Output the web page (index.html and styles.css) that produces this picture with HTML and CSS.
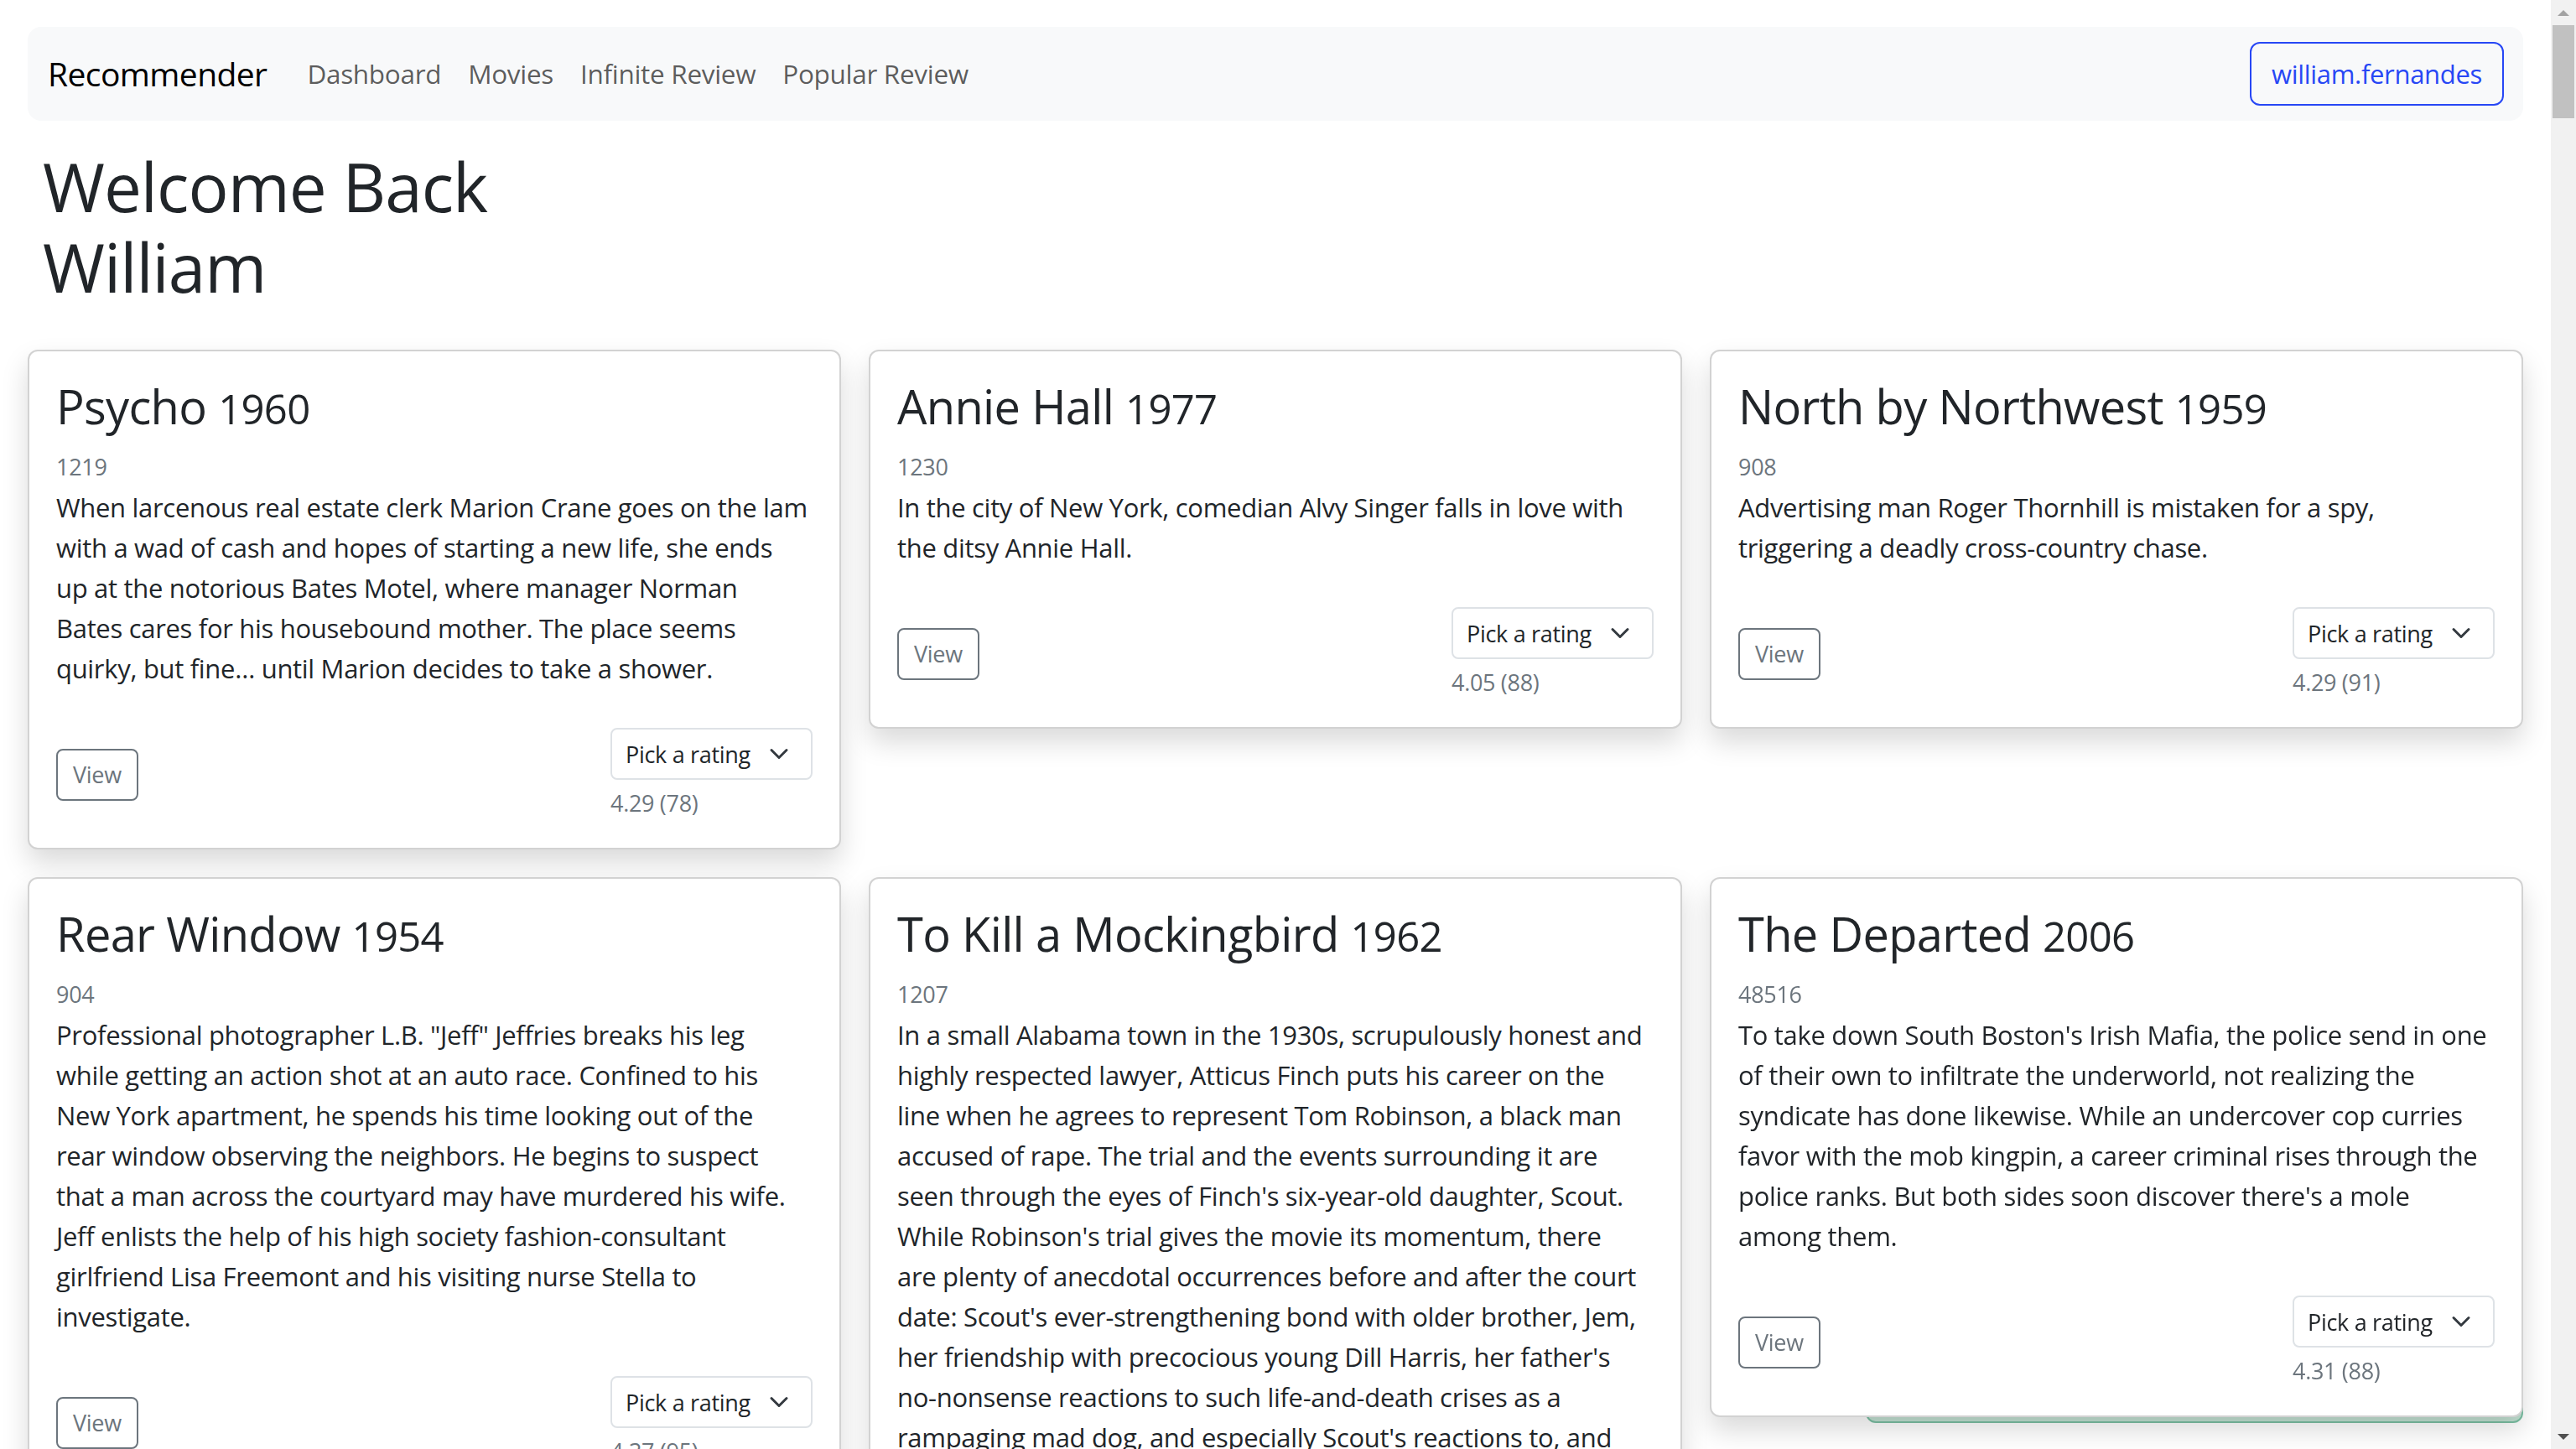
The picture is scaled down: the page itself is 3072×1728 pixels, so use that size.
FILE: index.html
```html
<!DOCTYPE html>
<html lang="en">
<head>
<meta charset="utf-8">
<title>Recommender</title>
<link rel="stylesheet" href="styles.css">
</head>
<body>
<div class="page">
  <nav class="navbar">
    <a class="brand" href="#">Recommender</a>
    <div class="nav-links">
      <a class="nav-link" href="#">Dashboard</a>
      <a class="nav-link" href="#">Movies</a>
      <a class="nav-link" href="#">Infinite Review</a>
      <a class="nav-link" href="#">Popular Review</a>
    </div>
    <button class="user-btn">william.fernandes</button>
  </nav>

  <h1 class="welcome">Welcome Back<br>William</h1>

  <div class="grid">
    <div class="card"><div class="card-body">
      <h3 class="card-title">Psycho <small>1960</small></h3>
      <div class="movie-id">1219</div>
      <p class="card-text">When larcenous real estate clerk Marion Crane goes on the lam<br>with a wad of cash and hopes of starting a new life, she ends<br>up at the notorious Bates Motel, where manager Norman<br>Bates cares for his housebound mother. The place seems<br>quirky, but fine… until Marion decides to take a shower.</p>
      <div class="card-actions">
        <button class="btn-view">View</button>
        <div class="rating">
          <span class="select-wrap"><select class="rating-select"><option>Pick a rating</option><option>1</option><option>2</option><option>3</option><option>4</option><option>5</option></select><svg class="chev" viewBox="0 0 16 16" width="24" height="24"><path d="m2 5 6 6 6-6" fill="none" stroke="#343a40" stroke-width="2" stroke-linecap="round" stroke-linejoin="round"/></svg></span>
          <div class="rating-avg">4.29 (78)</div>
        </div>
      </div>
    </div></div>

    <div class="card"><div class="card-body">
      <h3 class="card-title">Annie Hall <small>1977</small></h3>
      <div class="movie-id">1230</div>
      <p class="card-text">In the city of New York, comedian Alvy Singer falls in love with<br>the ditsy Annie Hall.</p>
      <div class="card-actions">
        <button class="btn-view">View</button>
        <div class="rating">
          <span class="select-wrap"><select class="rating-select"><option>Pick a rating</option><option>1</option><option>2</option><option>3</option><option>4</option><option>5</option></select><svg class="chev" viewBox="0 0 16 16" width="24" height="24"><path d="m2 5 6 6 6-6" fill="none" stroke="#343a40" stroke-width="2" stroke-linecap="round" stroke-linejoin="round"/></svg></span>
          <div class="rating-avg">4.05 (88)</div>
        </div>
      </div>
    </div></div>

    <div class="card"><div class="card-body">
      <h3 class="card-title">North by Northwest <small>1959</small></h3>
      <div class="movie-id">908</div>
      <p class="card-text">Advertising man Roger Thornhill is mistaken for a spy,<br>triggering a deadly cross-country chase.</p>
      <div class="card-actions">
        <button class="btn-view">View</button>
        <div class="rating">
          <span class="select-wrap"><select class="rating-select"><option>Pick a rating</option><option>1</option><option>2</option><option>3</option><option>4</option><option>5</option></select><svg class="chev" viewBox="0 0 16 16" width="24" height="24"><path d="m2 5 6 6 6-6" fill="none" stroke="#343a40" stroke-width="2" stroke-linecap="round" stroke-linejoin="round"/></svg></span>
          <div class="rating-avg">4.29 (91)</div>
        </div>
      </div>
    </div></div>

    <div class="card"><div class="card-body">
      <h3 class="card-title">Rear Window <small>1954</small></h3>
      <div class="movie-id">904</div>
      <p class="card-text">Professional photographer L.B. "Jeff" Jeffries breaks his leg<br>while getting an action shot at an auto race. Confined to his<br>New York apartment, he spends his time looking out of the<br>rear window observing the neighbors. He begins to suspect<br>that a man across the courtyard may have murdered his wife.<br>Jeff enlists the help of his high society fashion-consultant<br>girlfriend Lisa Freemont and his visiting nurse Stella to<br>investigate.</p>
      <div class="card-actions">
        <button class="btn-view">View</button>
        <div class="rating">
          <span class="select-wrap"><select class="rating-select"><option>Pick a rating</option><option>1</option><option>2</option><option>3</option><option>4</option><option>5</option></select><svg class="chev" viewBox="0 0 16 16" width="24" height="24"><path d="m2 5 6 6 6-6" fill="none" stroke="#343a40" stroke-width="2" stroke-linecap="round" stroke-linejoin="round"/></svg></span>
          <div class="rating-avg">4.37 (95)</div>
        </div>
      </div>
    </div></div>

    <div class="card"><div class="card-body">
      <h3 class="card-title">To Kill a Mockingbird <small>1962</small></h3>
      <div class="movie-id">1207</div>
      <p class="card-text">In a small Alabama town in the 1930s, scrupulously honest and<br>highly respected lawyer, Atticus Finch puts his career on the<br>line when he agrees to represent Tom Robinson, a black man<br>accused of rape. The trial and the events surrounding it are<br>seen through the eyes of Finch's six-year-old daughter, Scout.<br>While Robinson's trial gives the movie its momentum, there<br>are plenty of anecdotal occurrences before and after the court<br>date: Scout's ever-strengthening bond with older brother, Jem,<br>her friendship with precocious young Dill Harris, her father's<br>no-nonsense reactions to such life-and-death crises as a<br>rampaging mad dog, and especially Scout's reactions to, and<br>relationship with, Boo Radley, the reclusive 'village idiot'<br>who turns out to be her salvation when she is attacked by a<br>vengeful enemy.</p>
      <div class="card-actions">
        <button class="btn-view">View</button>
        <div class="rating">
          <span class="select-wrap"><select class="rating-select"><option>Pick a rating</option><option>1</option><option>2</option><option>3</option><option>4</option><option>5</option></select><svg class="chev" viewBox="0 0 16 16" width="24" height="24"><path d="m2 5 6 6 6-6" fill="none" stroke="#343a40" stroke-width="2" stroke-linecap="round" stroke-linejoin="round"/></svg></span>
          <div class="rating-avg">4.25 (76)</div>
        </div>
      </div>
    </div></div>

    <div class="card"><div class="card-body">
      <h3 class="card-title">The Departed <small>2006</small></h3>
      <div class="movie-id">48516</div>
      <p class="card-text">To take down South Boston's Irish Mafia, the police send in one<br>of their own to infiltrate the underworld, not realizing the<br>syndicate has done likewise. While an undercover cop curries<br>favor with the mob kingpin, a career criminal rises through the<br>police ranks. But both sides soon discover there's a mole<br>among them.</p>
      <div class="card-actions">
        <button class="btn-view">View</button>
        <div class="rating">
          <span class="select-wrap"><select class="rating-select"><option>Pick a rating</option><option>1</option><option>2</option><option>3</option><option>4</option><option>5</option></select><svg class="chev" viewBox="0 0 16 16" width="24" height="24"><path d="m2 5 6 6 6-6" fill="none" stroke="#343a40" stroke-width="2" stroke-linecap="round" stroke-linejoin="round"/></svg></span>
          <div class="rating-avg">4.31 (88)</div>
        </div>
      </div>
    </div></div>
  </div>
</div>

<div class="toast" aria-hidden="true"></div>

<div class="scrollbar" aria-hidden="true">
  <div class="sb-up"></div>
  <div class="sb-thumb"></div>
  <div class="sb-down"></div>
</div>
</body>
</html>
```

FILE: styles.css
```css
html, body {
  margin: 0;
  padding: 0;
}

body {
  font-family: "Open Sans", "Noto Sans", sans-serif;
  font-size: 31px;
  line-height: 48px;
  color: #212529;
  background: #fff;
  letter-spacing: -0.01em;
}

.page {
  margin-right: 30px;
  padding: 32px 33px 0;
}

/* navbar */
.navbar {
  display: flex;
  align-items: center;
  height: 112px;
  padding: 0 23px 0 24px;
  background: #f8f9fa;
  border-radius: 16px;
}
.brand {
  font-size: 39px;
  line-height: 60px;
  color: #000;
  text-decoration: none;
  margin-right: 32px;
  letter-spacing: -0.015em;
}
.nav-links {
  display: flex;
}
.nav-link {
  padding: 0 16px;
  font-size: 31.5px;
  line-height: 48px;
  color: rgba(0, 0, 0, 0.65);
  text-decoration: none;
}
.user-btn {
  margin-left: auto;
  font-family: inherit;
  font-size: 31px;
  line-height: 48px;
  letter-spacing: inherit;
  padding: 12px 24px;
  color: #2747f5;
  background: transparent;
  border: 2px solid #2747f5;
  border-radius: 12px;
}

/* heading */
.welcome {
  font-size: 80px;
  line-height: 96px;
  font-weight: 400;
  letter-spacing: -0.012em;
  margin: 30px 0 51px 18px;
  color: #212529;
}

/* cards */
.grid {
  display: grid;
  grid-template-columns: repeat(3, 1fr);
  column-gap: 33px;
  row-gap: 33px;
  align-items: start;
}
.card {
  position: relative;
  z-index: 1;
  background: #fff;
  border: 2px solid rgba(0, 0, 0, 0.175);
  border-radius: 12px;
  box-shadow: 0 16px 32px rgba(0, 0, 0, 0.15);
}
.card-body {
  padding: 32px;
}
.card-title {
  margin: 0 0 15px;
  font-size: 56px;
  line-height: 67px;
  font-weight: 400;
  letter-spacing: -0.012em;
}
.card-title small {
  font-size: 0.875em;
}
.movie-id {
  font-size: 27px;
  line-height: 42px;
  margin-bottom: 3px;
  color: #6c757d;
}
.card-text {
  margin: 0;
  white-space: nowrap;
}
.card-actions {
  display: flex;
  justify-content: space-between;
  align-items: center;
  margin-top: 47px;
}
.btn-view {
  font-family: inherit;
  font-size: 27px;
  line-height: 42px;
  letter-spacing: inherit;
  padding: 8px 18px;
  color: #6c757d;
  background: transparent;
  border: 2px solid #6c757d;
  border-radius: 8px;
}
.rating {
  display: flex;
  flex-direction: column;
  align-items: flex-start;
}
.select-wrap {
  position: relative;
  display: inline-block;
}
.rating-select {
  -webkit-appearance: none;
  appearance: none;
  font-family: inherit;
  font-size: 27px;
  letter-spacing: inherit;
  height: 62px;
  padding: 8px 72px 8px 16px;
  color: #212529;
  background: #fff;
  border: 2px solid #dee2e6;
  border-radius: 8px;
}
.chev {
  position: absolute;
  right: 28px;
  top: 50%;
  transform: translateY(-50%);
  pointer-events: none;
}
.rating-avg {
  margin-top: 7px;
  font-size: 27px;
  line-height: 42px;
  color: #6c757d;
}

/* toast peeking behind the last card */
.toast {
  position: fixed;
  right: 63px;
  bottom: 31px;
  width: 784px;
  height: 120px;
  box-sizing: border-box;
  background: #c3e2d3;
  border: 2px solid #7cc1a4;
  border-radius: 12px;
  z-index: 0;
}

/* window scrollbar */
.scrollbar {
  position: fixed;
  top: 0;
  right: 0;
  width: 30px;
  height: 100vh;
  background: #f1f1f1;
  z-index: 5;
}
.sb-up,
.sb-down {
  position: absolute;
  left: 8px;
  width: 0;
  height: 0;
  border-left: 7px solid transparent;
  border-right: 7px solid transparent;
}
.sb-up {
  top: 12px;
  border-bottom: 7px solid #a3a3a3;
}
.sb-down {
  bottom: 11px;
  border-top: 7px solid #505050;
}
.sb-thumb {
  position: absolute;
  top: 30px;
  left: 2px;
  width: 26px;
  height: 111px;
  background: #c1c1c1;
}
```
